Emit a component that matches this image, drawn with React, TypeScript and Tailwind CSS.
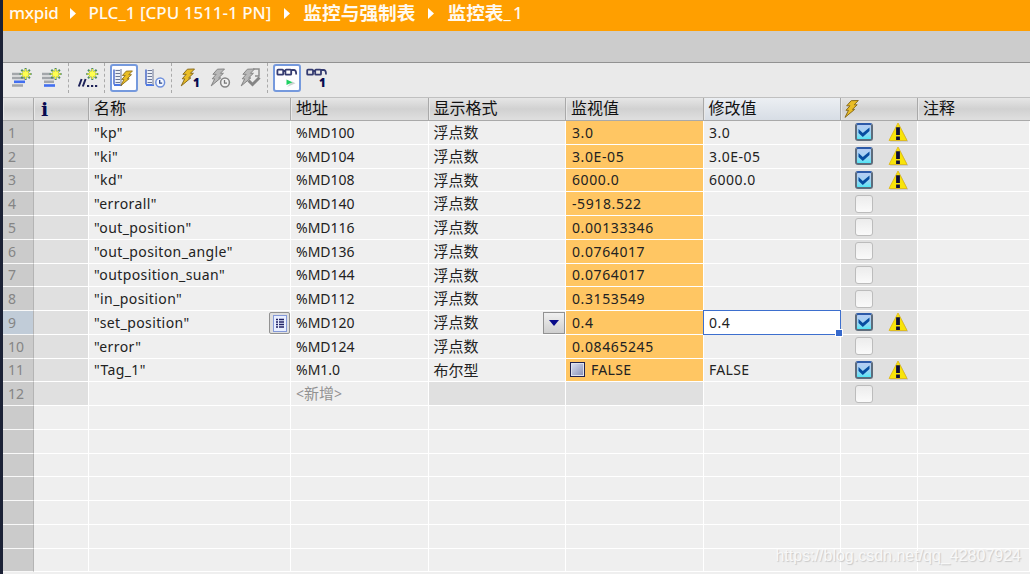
import type { ReactNode } from 'react';
import clsx from 'clsx';

type Tag = {
    name?: string;
    address?: string;
    format?: string;
    monitor?: string;
    modify?: string;
    checked?: boolean;
};

const FLOAT = '浮点数';

const TAGS: Tag[] = [
    { name: 'kp', address: '%MD100', format: FLOAT, monitor: '3.0', modify: '3.0', checked: true },
    { name: 'ki', address: '%MD104', format: FLOAT, monitor: '3.0E-05', modify: '3.0E-05', checked: true },
    { name: 'kd', address: '%MD108', format: FLOAT, monitor: '6000.0', modify: '6000.0', checked: true },
    { name: 'errorall', address: '%MD140', format: FLOAT, monitor: '-5918.522' },
    { name: 'out_position', address: '%MD116', format: FLOAT, monitor: '0.00133346' },
    { name: 'out_positon_angle', address: '%MD136', format: FLOAT, monitor: '0.0764017' },
    { name: 'outposition_suan', address: '%MD144', format: FLOAT, monitor: '0.0764017' },
    { name: 'in_position', address: '%MD112', format: FLOAT, monitor: '0.3153549' },
    { name: 'set_position', address: '%MD120', format: FLOAT, monitor: '0.4', modify: '0.4', checked: true },
    { name: 'error', address: '%MD124', format: FLOAT, monitor: '0.08465245' },
    { name: 'Tag_1', address: '%M1.0', format: '布尔型', monitor: 'FALSE', modify: 'FALSE', checked: true },
];

const SELECTED = 8;
const EMPTY_ROWS = 8;
const COLS = 'grid grid-cols-[31px_55px_202px_137.5px_137.5px_137.5px_137.5px_77px_1fr]';

function Star({ x, y }: { x: number; y: number }) {
    return (
        <g transform={`translate(${x} ${y})`}>
            <path d="M0-6V6M-6 0H6M-4.3-4.3 4.3 4.3M4.3-4.3-4.3 4.3" stroke="#4b8a68" strokeWidth="2" />
            <path d="M0-5V5M-5 0H5M-3-3 3 3M3-3-3 3" stroke="#f0ea3c" strokeWidth="1.5" />
            <circle r="2.8" fill="#ffff50" />
        </g>
    );
}

function Bolt({ gray = false }: { gray?: boolean }) {
    return (
        <path
            d="M7.2.7 14.3.5 10.2 4.8H13.2L8.4 9.4H10.6L1 17.4 4.5 10.3H2L6 5.8H2.7Z"
            fill={gray ? '#b9b9b9' : '#e9bd26'}
            stroke={gray ? '#858585' : '#8a6c1c'}
            strokeWidth="1"
            strokeLinejoin="round"
        />
    );
}

function Clock({ x, y, gray = false }: { x: number; y: number; gray?: boolean }) {
    const stroke = gray ? '#858585' : '#6f90dc';
    return (
        <g transform={`translate(${x} ${y})`} fill="none">
            <circle r="4.4" fill={gray ? '#f1f1f1' : '#f4f8ff'} stroke={stroke} strokeWidth="1.5" />
            <path d="M-.5-2.5V.7H2" stroke={gray ? '#777' : '#2d4990'} strokeWidth="1.3" />
        </g>
    );
}

function Glasses() {
    return (
        <g fill="none" stroke="#343b70" strokeWidth="1.8">
            <rect x="1.2" y="5.2" width="5.8" height="5" rx=".8" />
            <rect x="9.2" y="5.2" width="5.8" height="5" rx=".8" />
            <path d="M7 6.5H9.5M15 5.5H18Q20 5.6 20 10" />
        </g>
    );
}

function ColumnSheet() {
    return (
        <>
            <rect x="2" y="4" width="6" height="15" fill="#edf0f6" />
            <path d="M1 4.5V19.5" stroke="#3f62c8" strokeWidth="1.4" />
            <path d="M1 20H9" stroke="#4d78e4" strokeWidth="2" />
            <path d="M2.5 5.5H7M2.5 8.5H7M2.5 11.5H7M2.5 14.5H7M2.5 17.5H7" stroke="#6c7895" />
            <path d="M8 4V20" stroke="#9aa1b4" strokeWidth="1.5" />
        </>
    );
}

function One({ x, y }: { x: number; y: number }) {
    return (
        <text x={x} y={y} fontFamily="Noto Sans, sans-serif" fontSize="11.5" fontWeight="900" fill="#080b50">
            1
        </text>
    );
}

function ToolIcon({ children, className }: { children: ReactNode; className?: string }) {
    return (
        <svg viewBox="0 0 24 28" className={clsx('h-7 w-6 shrink-0 overflow-visible', className)} fill="none">
            {children}
        </svg>
    );
}

function Divider({ className }: { className?: string }) {
    return <div className={clsx('h-[30px] border-l border-dashed border-[#aaa]', className)} />;
}

function ActiveTool({ children, className }: { children: ReactNode; className?: string }) {
    return (
        <div
            className={clsx(
                'flex h-7 w-7 shrink-0 items-center justify-center rounded-[3px] border-2 border-[#7599dd] bg-[#fdfdff]',
                className,
            )}
        >
            {children}
        </div>
    );
}

function Toolbar() {
    return (
        <div className="flex h-[34px] items-center bg-[#eaeaea] pb-1 pl-[6px]">
            <ToolIcon>
                <path d="M3 10H12M3 14H16M3 21.5H14" stroke="#a3a6aa" strokeWidth="2.6" />
                <path d="M5 17.8H16" stroke="#426ff0" strokeWidth="2.6" />
                <Star x={16.6} y={10} />
            </ToolIcon>
            <ToolIcon className="ml-[6px]">
                <path d="M3 10H12M3 14H15M5 17.7H15" stroke="#a3a6aa" strokeWidth="2.6" />
                <path d="M5 21.5H16" stroke="#426ff0" strokeWidth="2.6" />
                <Star x={16.6} y={10} />
            </ToolIcon>
            <Divider className="ml-[5px]" />
            <ToolIcon className="ml-[7px]">
                <path d="M2.8 22.5 5.6 15M6.8 22.5 9.6 15" stroke="#1d2258" strokeWidth="2" />
                <path d="M11 22H13.2M15 22H17.2M19 22H21.2" stroke="#1d2258" strokeWidth="2.2" />
                <Star x={16.3} y={10} />
            </ToolIcon>
            <Divider className="ml-1" />
            <ActiveTool className="ml-[5px]">
                <svg viewBox="0 0 24 24" className="h-6 w-6 shrink-0" fill="none">
                    <g transform="translate(1 -1)">
                        <ColumnSheet />
                    </g>
                    <g transform="translate(8 4.5) scale(.87)">
                        <Bolt />
                    </g>
                </svg>
            </ActiveTool>
            <ToolIcon className="ml-[5px]">
                <g transform="translate(2 1)">
                    <ColumnSheet />
                </g>
                <Clock x={17.2} y={18.5} />
            </ToolIcon>
            <Divider className="ml-1" />
            <ToolIcon className="ml-[7px]">
                <g transform="translate(1.2 4.5)">
                    <Bolt />
                </g>
                <One x={14} y={23} />
            </ToolIcon>
            <ToolIcon className="ml-[6px]">
                <g transform="translate(1.2 4.5)">
                    <Bolt gray />
                </g>
                <Clock x={16} y={18.5} gray />
            </ToolIcon>
            <ToolIcon className="ml-[6px]">
                <g transform="translate(1.2 4.5)">
                    <Bolt gray />
                </g>
                <path d="M14 5H20V12H16" stroke="#8d8d8d" strokeWidth="1.5" />
                <path d="M9.5 16.5 13.5 20.5 20.5 13.5" stroke="#858585" strokeWidth="3" />
            </ToolIcon>
            <Divider className="ml-1" />
            <ActiveTool className="ml-[5px]">
                <svg viewBox="0 0 24 24" className="h-6 w-6 shrink-0" fill="none">
                    <g transform="translate(1.2 -1.5)">
                        <Glasses />
                    </g>
                    <path d="M12 21 20.5 17.3 17 15.5Z" fill="#ccd2d0" />
                    <path d="M11.5 13.5V19L17.5 16.3Z" fill="#1ed062" />
                </svg>
            </ActiveTool>
            <ToolIcon className="ml-[5px]">
                <g transform="translate(0 .5)">
                    <Glasses />
                </g>
                <One x={13} y={23} />
            </ToolIcon>
        </div>
    );
}

function Crumb({ children, cjk = false, className }: { children: ReactNode; cjk?: boolean; className?: string }) {
    return (
        <span className={clsx('whitespace-nowrap', cjk ? 'text-[18.7px] font-bold' : 'text-[17px] font-medium', className)}>
            {children}
        </span>
    );
}

function CrumbArrow({ className }: { className?: string }) {
    return (
        <svg viewBox="0 0 6 11" className={clsx('h-[11px] w-[6px] shrink-0', className)}>
            <path d="M0 0 6 5.5 0 11Z" fill="white" />
        </svg>
    );
}

function HeaderCell({ children, className }: { children?: ReactNode; className?: string }) {
    return (
        <div className={clsx('flex items-center border-r border-[#a9a9a9] pb-[3px] pl-[5px] leading-none shadow-[inset_1px_0_0_#e8e8e8]', className)}>
            {children}
        </div>
    );
}

function Cell({ children, className }: { children?: ReactNode; className?: string }) {
    return (
        <div className={clsx('relative flex min-w-0 items-center border-r-[1.5px] border-b-[1.5px] border-white pl-[5px] whitespace-nowrap', className)}>
            {children}
        </div>
    );
}

function CheckBox({ checked = false }: { checked?: boolean }) {
    if (!checked) {
        return <div className="h-[18px] w-[18px] rounded-[3px] border border-[#bcbcbc] bg-linear-to-b from-[#ececec] to-[#fafafa]" />;
    }
    return (
        <div className="flex h-[18px] w-[18px] items-center justify-center rounded-[3px] border-2 border-[#5d6c7c] border-t-[#2c5aa8] bg-linear-to-b from-[#b4cdf3] via-[#a3d2f3] to-[#4ce6f6]">
            <svg viewBox="0 0 14 14" className="h-[14px] w-[14px] shrink-0">
                <path d="M1.5 4 5.8 8 12.5 2.5V6L5.8 12 1.5 8Z" fill="#064da0" />
            </svg>
        </div>
    );
}

function Warning() {
    return (
        <svg viewBox="0 0 20 20" className="ml-[15px] h-5 w-5 shrink-0">
            <path d="M11 2 20.2 19.6H2Z" fill="#b8b8b8" />
            <path d="M10 1 19 18.5H1Z" fill="#f8e409" stroke="#dfb713" strokeWidth=".8" />
            <path d="M10 5.3V13M10 14.5V18" stroke="#0d0d38" strokeWidth="3.8" />
        </svg>
    );
}

function Row({ tag, index }: { tag?: Tag; index: number }) {
    const used = index <= TAGS.length;
    const isNew = index === TAGS.length;
    const selected = index === SELECTED;

    return (
        <div className={clsx(COLS, 'h-[23.76px] shrink-0')}>
            <div
                className={clsx(
                    'flex items-center border-r border-b-[1.5px] border-r-[#b4b4b4] border-b-[#f8f8f8] pl-[5px] text-[#858585]',
                    selected ? 'bg-[#c1ccd8]' : 'bg-[#cbcbcb]',
                )}
            >
                {used && index + 1}
            </div>
            <Cell className={used ? 'bg-[#e0e0e0]' : undefined} />
            <Cell className="tracking-[0.4px]">
                {tag && `"${tag.name}"`}
                {selected && (
                    <span className="absolute top-px right-0 flex h-[22px] w-[21px] items-center justify-center rounded-[2px] border-[1.5px] border-[#929292] bg-[#dedede]">
                        <svg viewBox="0 0 14 17" className="h-[17px] w-[14px] shrink-0">
                            <rect x=".5" y=".5" width="13" height="16" fill="#e9efff" stroke="#8499d9" />
                            <path d="M3 4.5H5M3 7H5M3 9.5H5M3 12H5M6 4.5H11M6 7H11M6 9.5H11M6 12H11" stroke="#202266" strokeWidth="1.4" />
                        </svg>
                    </span>
                )}
            </Cell>
            <Cell>
                {tag?.address}
                {isNew && <span className="text-[#929292]">&lt;<span className="text-[15px]">新增</span>&gt;</span>}
            </Cell>
            <Cell className={clsx('text-[15px]', isNew && 'bg-[#e0e0e0]')}>
                {tag?.format}
                {selected && (
                    <span className="absolute top-px right-0 flex h-[22px] w-[22px] items-center justify-center border-[1.5px] border-[#929292] bg-linear-to-b from-[#f0f0f0] to-[#cfcfcf]">
                        <svg viewBox="0 0 10 6" className="h-[6px] w-[10px]">
                            <path d="M0 0H10L5 6Z" fill="#080b8a" />
                        </svg>
                    </span>
                )}
            </Cell>
            <Cell className={clsx('pl-[6px]! tracking-[0.6px]', tag && 'bg-[#ffc663]', isNew && 'bg-[#e0e0e0]')}>
                {tag?.monitor === 'FALSE' ? (
                    <>
                        <span className="mr-[6px] -ml-[2px] h-[15px] w-[15px] border-[1.5px] border-[#20224e] bg-linear-to-br from-[#dfe3f1] to-[#858db4] shadow-[inset_0_0_0_1px_#dfe2ed]" />
                        <span className="tracking-[0.3px]">FALSE</span>
                    </>
                ) : (
                    tag?.monitor
                )}
            </Cell>
            <Cell className="pl-[5.5px]!">
                {selected && (
                    <span className="absolute -top-[1.5px] right-[-1px] bottom-[-1.5px] -left-[0.5px] z-10 border-[1.5px] border-[#3d6fce] bg-white">
                        <span className="absolute -right-[2px] -bottom-[2px] h-[6px] w-[6px] bg-[#3568cc] outline outline-white" />
                    </span>
                )}
                <span className={clsx('relative z-20', tag?.modify === 'FALSE' ? 'tracking-[0.3px]' : 'tracking-[0.5px]')}>
                    {tag?.modify}
                </span>
            </Cell>
            <Cell className={clsx('pl-[14px]!', used && 'bg-[#e0e0e0]')}>
                {used && <CheckBox checked={tag?.checked} />}
                {tag?.checked && <Warning />}
            </Cell>
            <Cell className="border-r-0" />
        </div>
    );
}

export default function App() {
    return (
        <div className="relative h-[574px] w-[1030px] overflow-hidden border-l-[3px] border-[#1b2135] bg-[#efefef] font-['Noto_Sans','Noto_Sans_CJK_SC',sans-serif] text-[14px] text-[#222]">
            <div className="flex h-[31px] items-center bg-[#ff9f00] pb-[5px] pl-[6px] text-[#fff9ef]">
                <Crumb className="tracking-[-0.3px]">mxpid</Crumb>
                <CrumbArrow className="mr-[13px] ml-[11px]" />
                <Crumb>PLC_1 [CPU 1511-1 PN]</Crumb>
                <CrumbArrow className="mr-[13px] ml-[13px]" />
                <Crumb cjk>监控与强制表</Crumb>
                <CrumbArrow className="mr-[13px] ml-[13px]" />
                <Crumb cjk>监控表</Crumb>
                <Crumb className="tracking-[2px]">_1</Crumb>
            </div>
            <div className="h-8 border-b-[1.5px] border-[#929292] bg-[#cccccc]" />
            <Toolbar />

            <div
                className={clsx(
                    COLS,
                    'h-[24px] border-t border-b border-t-[#c0c0c0] border-b-[#a9a9a9] bg-linear-to-b from-[#e6e6e6] via-[#d1d1d1] to-[#dfdfdf] text-[16px] text-[#111]',
                )}
            >
                <HeaderCell />
                <HeaderCell className="pb-0!">
                    <span className="pl-[2px] font-['DejaVu_Serif',serif] text-[19px] font-bold text-[#080b50]">i</span>
                </HeaderCell>
                <HeaderCell>名称</HeaderCell>
                <HeaderCell>地址</HeaderCell>
                <HeaderCell>显示格式</HeaderCell>
                <HeaderCell>监视值</HeaderCell>
                <HeaderCell className="bg-linear-to-b from-[#eceff3] to-[#d7dde5]">修改值</HeaderCell>
                <HeaderCell className="pb-0!">
                    <svg viewBox="0 0 16 19" className="-ml-[2px] h-[19px] w-4 shrink-0">
                        <Bolt />
                    </svg>
                </HeaderCell>
                <HeaderCell className="border-r-0">注释</HeaderCell>
            </div>

            {TAGS.map((tag, i) => (
                <Row key={tag.name} tag={tag} index={i} />
            ))}
            {Array.from({ length: EMPTY_ROWS }, (_, i) => (
                <Row key={i} index={TAGS.length + i} />
            ))}

            <div className="absolute right-[9px] bottom-[6px] font-['Liberation_Sans',sans-serif] text-[16px] text-[#f8f8f8] [text-shadow:1px_1px_1px_#c8c8c8]">
                https://blog.csdn.net/qq_42807924
            </div>
        </div>
    );
}
